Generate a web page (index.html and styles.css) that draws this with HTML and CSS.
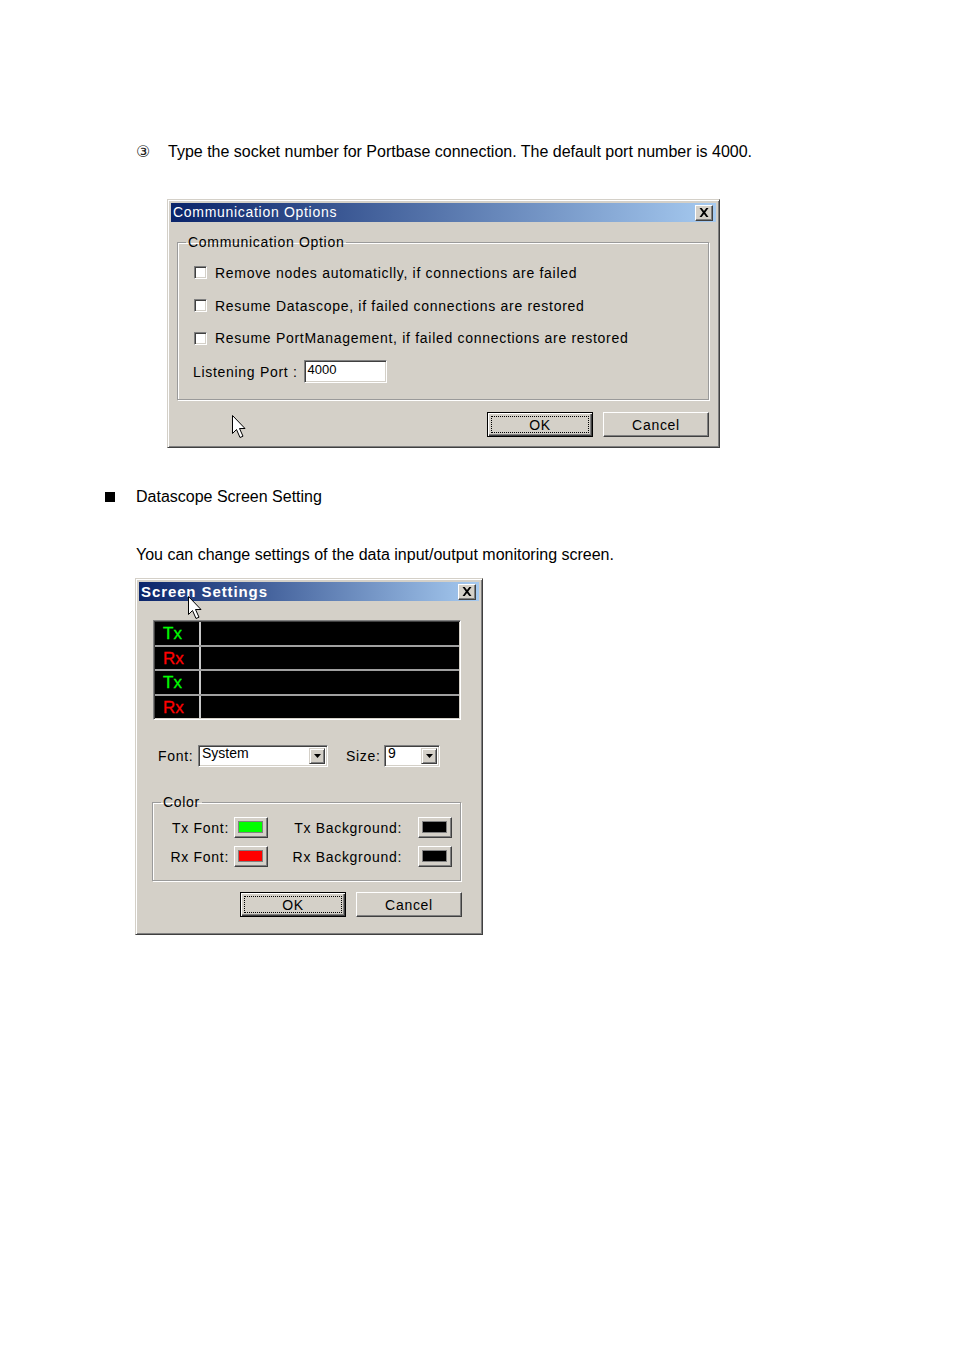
FILE: index.html
```html
<!DOCTYPE html>
<html>
<head>
<meta charset="utf-8">
<link rel="stylesheet" href="styles.css">
</head>
<body>
<div class="doc">
  <p class="step"><span class="num">③</span><span>Type the socket number for Portbase connection. The default port number is 4000.</span></p>

  <div class="win win-comm">
    <div class="titlebar"><span class="title">Communication Options</span><span class="close"><svg width="10" height="9" viewBox="0 0 10 9"><path d="M0.5 0h2.2L5 3 7.3 0h2.2L6.2 4.5 9.5 9H7.3L5 6 2.7 9H0.5l3.3-4.5z" fill="#000"/></svg></span></div>
    <fieldset class="group comm-group">
      <legend>Communication Option</legend>
      <div class="rows">
        <div class="row"><span class="check"></span><span>Remove nodes automaticlly, if connections are failed</span></div>
        <div class="row"><span class="check"></span><span>Resume Datascope, if failed connections are restored</span></div>
        <div class="row"><span class="check"></span><span>Resume PortManagement, if failed connections are restored</span></div>
        <div class="row port-row"><span>Listening Port :</span><span class="edit">4000</span></div>
      </div>
    </fieldset>
    <div class="buttons comm-buttons">
      <span class="btn default"><span class="focus">OK</span></span>
      <span class="btn">Cancel</span>
    </div>
    <svg class="cursor cursor1" width="14" height="24" viewBox="0 0 14 24"><path d="M0.5 0.5v18l4-4 3.5 8 3-1.3-3.5-7.7h5.5z" fill="#fff" stroke="#000" stroke-width="1"/></svg>
  </div>

  <div class="section"><span class="square"></span><span>Datascope Screen Setting</span></div>
  <p class="para">You can change settings of the data input/output monitoring screen.</p>

  <div class="win win-screen">
    <div class="titlebar"><span class="title bold">Screen Settings</span><span class="close"><svg width="10" height="9" viewBox="0 0 10 9"><path d="M0.5 0h2.2L5 3 7.3 0h2.2L6.2 4.5 9.5 9H7.3L5 6 2.7 9H0.5l3.3-4.5z" fill="#000"/></svg></span></div>
    <div class="scope">
      <div class="srow r25"><span class="tag tx">Tx</span><span class="line"></span></div>
      <div class="srow r24"><span class="tag rx">Rx</span><span class="line"></span></div>
      <div class="srow r25"><span class="tag tx">Tx</span><span class="line"></span></div>
      <div class="srow last"><span class="tag rx">Rx</span><span class="line"></span></div>
    </div>
    <div class="fontrow">
      <span class="lbl-font">Font:</span>
      <span class="combo combo-font"><span class="ctext">System</span><span class="drop"><svg width="7" height="4" viewBox="0 0 7 4"><path d="M0 0h7L3.5 4z" fill="#000"/></svg></span></span>
      <span class="lbl-size">Size:</span>
      <span class="combo combo-size"><span class="ctext">9</span><span class="drop"><svg width="7" height="4" viewBox="0 0 7 4"><path d="M0 0h7L3.5 4z" fill="#000"/></svg></span></span>
    </div>
    <fieldset class="group color-group">
      <legend>Color</legend>
      <div class="crow">
        <span class="clbl l1">Tx Font:</span><span class="swatch"><span class="fill green"></span></span>
        <span class="clbl l2">Tx Background:</span><span class="swatch"><span class="fill black"></span></span>
      </div>
      <div class="crow">
        <span class="clbl l1">Rx Font:</span><span class="swatch"><span class="fill red"></span></span>
        <span class="clbl l2">Rx Background:</span><span class="swatch"><span class="fill black"></span></span>
      </div>
    </fieldset>
    <div class="buttons screen-buttons">
      <span class="btn default"><span class="focus">OK</span></span>
      <span class="btn">Cancel</span>
    </div>
    <svg class="cursor cursor2" width="14" height="24" viewBox="0 0 14 24"><path d="M0.5 0.5v18l4-4 3.5 8 3-1.3-3.5-7.7h5.5z" fill="#fff" stroke="#000" stroke-width="1"/></svg>
  </div>
</div>
</body>
</html>
```

FILE: styles.css
```css
html, body {
  margin: 0;
  padding: 0;
  background: #fff;
}
body {
  font-family: "Liberation Sans", Arial, sans-serif;
  color: #000;
}
.doc {
  padding-top: 143px;
  width: 954px;
  height: 1208px;
}
.step {
  margin: 0 0 0 136px;
  display: flex;
  font-size: 16px;
  line-height: 18px;
  height: 18px;
}
.step .num {
  font-family: "DejaVu Sans", sans-serif;
  font-size: 16px;
  width: 32px;
  color: #222;
}

/* window chrome */
.win {
  position: relative;
  background: #d4d0c8;
  border: 1px solid;
  border-color: #d4d0c8 #404040 #404040 #d4d0c8;
  box-shadow: inset 1px 1px #fff, inset -1px -1px #808080;
  padding: 3px;
  box-sizing: border-box;
  font-family: "Liberation Sans", Arial, sans-serif;
  font-size: 14px;
  letter-spacing: 0.7px;
  color: #000;
}
.win-comm {
  margin: 38px 0 0 167px;
  width: 553px;
  height: 249px;
}
.win-screen {
  margin: 14px 0 0 135px;
  width: 348px;
  height: 357px;
}
.titlebar {
  height: 19px;
  background: linear-gradient(to right, #0a246a, #a6caf0);
  display: flex;
  align-items: center;
  justify-content: space-between;
  padding: 0 3px 0 2px;
}
.title {
  color: #fff;
  font-size: 14px;
  line-height: 19px;
}
.title.bold {
  font-weight: bold;
  font-size: 15px;
  letter-spacing: 0.9px;
}
.close {
  width: 16px;
  height: 14px;
  background: #d4d0c8;
  border: 1px solid;
  border-color: #fff #404040 #404040 #fff;
  box-shadow: inset -1px -1px #808080;
  display: flex;
  align-items: center;
  justify-content: center;
}

/* group boxes */
.group {
  border: 1px solid #9a9a9a;
  box-shadow: 1px 1px #fff, inset 1px 1px #fff;
  padding: 0;
  margin: 0;
  min-width: 0;
}
.group legend {
  margin-left: 8px;
  padding: 0 2px;
  line-height: 16px;
  height: 16px;
}
.comm-group {
  margin: 12px 7px 0 6px;
  height: 166px;
  box-sizing: border-box;
}
.rows {
  padding: 6px 0 0 16px;
}
.row {
  height: 33px;
  display: flex;
  align-items: center;
  gap: 8px;
}
.row:nth-child(3) {
  height: 32px;
}
.port-row {
  height: 35px;
  gap: 6px;
  margin-left: -1px;
}
.check {
  width: 11px;
  height: 11px;
  background: #fff;
  border: 1px solid;
  border-color: #808080 #fff #fff #808080;
  box-shadow: inset 1px 1px #404040, inset -1px -1px #d4d0c8;
}
.edit {
  background: #fff;
  border: 1px solid;
  border-color: #808080 #fff #fff #808080;
  box-shadow: inset 1px 1px #404040, inset -1px -1px #d4d0c8;
  padding: 1px 0 0 3px;
  line-height: 16px;
  font-size: 13px;
  letter-spacing: 0;
  width: 83px;
  height: 23px;
  box-sizing: border-box;
  margin-top: -1px;
}

/* buttons */
.buttons {
  display: flex;
  justify-content: flex-end;
  gap: 10px;
}
.comm-buttons {
  margin: 12px 7px 0 0;
}
.screen-buttons {
  margin: 11px 17px 0 0;
}
.btn {
  width: 106px;
  height: 25px;
  box-sizing: border-box;
  border: 1px solid;
  border-color: #fff #404040 #404040 #fff;
  box-shadow: inset -1px -1px #808080;
  display: flex;
  align-items: center;
  justify-content: center;
  line-height: 16px;
}
.btn.default {
  border: 1px solid #000;
  box-shadow: inset 1px 1px #fff, inset -1px -1px #404040, inset -2px -2px #808080;
  padding: 3px;
}
.focus {
  flex: 1;
  align-self: stretch;
  border: 1px dotted #000;
  display: flex;
  align-items: center;
  justify-content: center;
}

.cursor {
  position: absolute;
}
.cursor1 {
  left: 64px;
  top: 215px;
}
.cursor2 {
  left: 52px;
  top: 17px;
}

/* text sections */
.section {
  margin: 40px 0 0 105px;
  display: flex;
  align-items: center;
  font-size: 16px;
  line-height: 18px;
  height: 18px;
}
.square {
  width: 10px;
  height: 10px;
  background: #000;
  margin-right: 21px;
}
.para {
  margin: 40px 0 0 136px;
  font-size: 16px;
  line-height: 18px;
  height: 18px;
}

/* scope grid */
.scope {
  margin: 19px 18px 0 14px;
  height: 100px;
  box-sizing: border-box;
  border: 1px solid;
  border-color: #808080 #fff #fff #808080;
  box-shadow: inset 1px 1px #404040, inset -1px -1px #d4d0c8;
  padding: 1px;
  background: #000;
  display: flex;
  flex-direction: column;
}
.srow {
  display: flex;
  border-bottom: 2px solid #a0a0a0;
  box-sizing: border-box;
}
.srow.r25 { height: 25px; }
.srow.r24 { height: 24px; }
.srow.last {
  border-bottom: none;
  height: 22px;
}
.tag {
  width: 46px;
  border-right: 2px solid #c8c8c8;
  font-size: 17px;
  letter-spacing: 0;
  padding-left: 8px;
  box-sizing: border-box;
  line-height: 23px;
  -webkit-text-stroke: 0.3px currentColor;
}
.tx { color: #00ff00; }
.rx { color: #ff0000; }
.line { flex: 1; }

/* font row */
.fontrow {
  margin: 25px 0 0 19px;
  height: 22px;
  display: flex;
  align-items: center;
}
.lbl-font { width: 40px; }
.lbl-size { width: 38px; margin-left: 18px; }
.combo {
  height: 22px;
  box-sizing: border-box;
  background: #fff;
  border: 1px solid;
  border-color: #808080 #fff #fff #808080;
  box-shadow: inset 1px 1px #404040, inset -1px -1px #d4d0c8;
  display: flex;
  justify-content: space-between;
  padding: 2px 2px 2px 3px;
}
.combo-font { width: 130px; }
.combo-size { width: 56px; }
.ctext {
  line-height: 14px;
  margin-top: -2px;
  letter-spacing: 0;
}
.drop {
  width: 16px;
  background: #d4d0c8;
  box-sizing: border-box;
  border: 1px solid;
  border-color: #d4d0c8 #404040 #404040 #d4d0c8;
  box-shadow: inset 1px 1px #fff, inset -1px -1px #808080;
  display: flex;
  align-items: center;
  justify-content: center;
}

/* color group */
.color-group {
  margin: 27px 18px 0 13px;
  height: 87px;
  box-sizing: border-box;
}
.crow {
  height: 29px;
  display: flex;
  align-items: center;
}
.crow:first-of-type {
  margin-top: 3px;
}
.clbl { text-align: right; box-sizing: border-box; white-space: nowrap; }
.l1 { width: 81px; padding-right: 5px; }
.l2 { width: 150px; padding-right: 16px; }
.swatch {
  width: 34px;
  height: 21px;
  flex: none;
  box-sizing: border-box;
  border: 1px solid;
  border-color: #fff #404040 #404040 #fff;
  box-shadow: inset -1px -1px #808080;
  padding: 3px 4px 4px 3px;
  display: flex;
}
.fill { flex: 1; border: 1px solid #808080; }
.green { background: #00ff00; }
.red { background: #ff0000; }
.black { background: #000; }
```
